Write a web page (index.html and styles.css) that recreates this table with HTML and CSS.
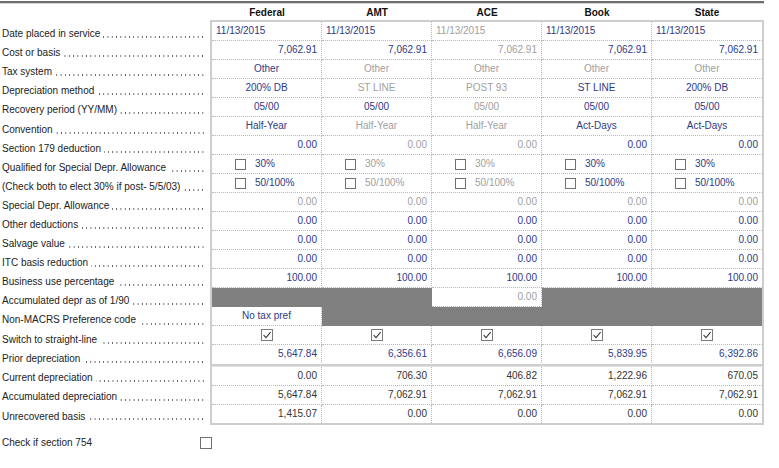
FILE: index.html
```html
<!DOCTYPE html>
<html>
<head>
<meta charset="utf-8">
<link rel="stylesheet" href="styles.css">
</head>
<body>
<div class="page">
  <div class="topline"></div>
  <div class="hdr">
    <div class="hsp"></div>
    <div class="hcol">Federal</div>
    <div class="hcol">AMT</div>
    <div class="hcol">ACE</div>
    <div class="hcol">Book</div>
    <div class="hcol">State</div>
  </div>

  <div class="section">
    <div class="labels top">
      <div class="lbl"><span>Date placed in service</span><span class="dots"></span></div>
      <div class="lbl"><span>Cost or basis</span><span class="dots"></span></div>
      <div class="lbl"><span>Tax system</span><span class="dots"></span></div>
      <div class="lbl"><span>Depreciation method</span><span class="dots"></span></div>
      <div class="lbl"><span>Recovery period (YY/MM)</span><span class="dots"></span></div>
      <div class="lbl"><span>Convention</span><span class="dots"></span></div>
      <div class="lbl"><span>Section 179 deduction</span><span class="dots"></span></div>
      <div class="lbl"><span>Qualified for Special Depr. Allowance</span><span class="dots"></span></div>
      <div class="lbl"><span>(Check both to elect 30% if post- 5/5/03)</span><span class="dots"></span></div>
      <div class="lbl"><span>Special Depr. Allowance</span><span class="dots"></span></div>
      <div class="lbl"><span>Other deductions</span><span class="dots"></span></div>
      <div class="lbl"><span>Salvage value</span><span class="dots"></span></div>
      <div class="lbl"><span>ITC basis reduction</span><span class="dots"></span></div>
      <div class="lbl"><span>Business use percentage</span><span class="dots"></span></div>
      <div class="lbl"><span>Accumulated depr as of 1/90</span><span class="dots"></span></div>
      <div class="lbl"><span>Non-MACRS Preference code</span><span class="dots"></span></div>
      <div class="lbl"><span>Switch to straight-line</span><span class="dots"></span></div>
      <div class="lbl"><span>Prior depreciation</span><span class="dots"></span></div>
    </div>
    <div class="box boxtop">
      <div class="row">
        <div class="c l b">11/13/2015</div><div class="c l b">11/13/2015</div><div class="c l g">11/13/2015</div><div class="c l b">11/13/2015</div><div class="c l b">11/13/2015</div>
      </div>
      <div class="row">
        <div class="c r b">7,062.91</div><div class="c r b">7,062.91</div><div class="c r g">7,062.91</div><div class="c r b">7,062.91</div><div class="c r b">7,062.91</div>
      </div>
      <div class="row">
        <div class="c m b">Other</div><div class="c m g">Other</div><div class="c m g">Other</div><div class="c m g">Other</div><div class="c m g">Other</div>
      </div>
      <div class="row">
        <div class="c m b">200% DB</div><div class="c m g">ST LINE</div><div class="c m g">POST 93</div><div class="c m b">ST LINE</div><div class="c m b">200% DB</div>
      </div>
      <div class="row">
        <div class="c m b">05/00</div><div class="c m b">05/00</div><div class="c m g">05/00</div><div class="c m b">05/00</div><div class="c m b">05/00</div>
      </div>
      <div class="row">
        <div class="c m b">Half-Year</div><div class="c m g">Half-Year</div><div class="c m g">Half-Year</div><div class="c m b">Act-Days</div><div class="c m b">Act-Days</div>
      </div>
      <div class="row">
        <div class="c r b">0.00</div><div class="c r g">0.00</div><div class="c r g">0.00</div><div class="c r b">0.00</div><div class="c r b">0.00</div>
      </div>
      <div class="row">
        <div class="c cb b"><span class="box-ck"></span>30%</div><div class="c cb g"><span class="box-ck"></span>30%</div><div class="c cb g"><span class="box-ck"></span>30%</div><div class="c cb b"><span class="box-ck"></span>30%</div><div class="c cb b"><span class="box-ck"></span>30%</div>
      </div>
      <div class="row">
        <div class="c cb b"><span class="box-ck"></span>50/100%</div><div class="c cb g"><span class="box-ck"></span>50/100%</div><div class="c cb g"><span class="box-ck"></span>50/100%</div><div class="c cb b"><span class="box-ck"></span>50/100%</div><div class="c cb b"><span class="box-ck"></span>50/100%</div>
      </div>
      <div class="row">
        <div class="c r g">0.00</div><div class="c r g">0.00</div><div class="c r g">0.00</div><div class="c r g">0.00</div><div class="c r g">0.00</div>
      </div>
      <div class="row">
        <div class="c r b">0.00</div><div class="c r b">0.00</div><div class="c r b">0.00</div><div class="c r b">0.00</div><div class="c r b">0.00</div>
      </div>
      <div class="row">
        <div class="c r b">0.00</div><div class="c r b">0.00</div><div class="c r b">0.00</div><div class="c r b">0.00</div><div class="c r b">0.00</div>
      </div>
      <div class="row">
        <div class="c r b">0.00</div><div class="c r b">0.00</div><div class="c r b">0.00</div><div class="c r b">0.00</div><div class="c r b">0.00</div>
      </div>
      <div class="row">
        <div class="c r b">100.00</div><div class="c r b">100.00</div><div class="c r b">100.00</div><div class="c r b">100.00</div><div class="c r b">100.00</div>
      </div>
      <div class="row">
        <div class="c dark"></div><div class="c dark"></div><div class="c r g">0.00</div><div class="c dark"></div><div class="c dark last"></div>
      </div>
      <div class="row">
        <div class="c m b">No tax pref</div><div class="c dark"></div><div class="c dark"></div><div class="c dark"></div><div class="c dark last"></div>
      </div>
      <div class="row">
        <div class="c ck"><svg width="12" height="12" viewBox="0 0 12 12"><rect x="0.5" y="0.5" width="11" height="11" fill="#fff" stroke="#7a7a7a"/><path d="M2.6 6.2 L5 8.6 L9.6 3.2" fill="none" stroke="#3a3a3a" stroke-width="1.1"/></svg></div>
        <div class="c ck"><svg width="12" height="12" viewBox="0 0 12 12"><rect x="0.5" y="0.5" width="11" height="11" fill="#fff" stroke="#7a7a7a"/><path d="M2.6 6.2 L5 8.6 L9.6 3.2" fill="none" stroke="#3a3a3a" stroke-width="1.1"/></svg></div>
        <div class="c ck"><svg width="12" height="12" viewBox="0 0 12 12"><rect x="0.5" y="0.5" width="11" height="11" fill="#fff" stroke="#7a7a7a"/><path d="M2.6 6.2 L5 8.6 L9.6 3.2" fill="none" stroke="#3a3a3a" stroke-width="1.1"/></svg></div>
        <div class="c ck"><svg width="12" height="12" viewBox="0 0 12 12"><rect x="0.5" y="0.5" width="11" height="11" fill="#fff" stroke="#7a7a7a"/><path d="M2.6 6.2 L5 8.6 L9.6 3.2" fill="none" stroke="#3a3a3a" stroke-width="1.1"/></svg></div>
        <div class="c ck"><svg width="12" height="12" viewBox="0 0 12 12"><rect x="0.5" y="0.5" width="11" height="11" fill="#fff" stroke="#7a7a7a"/><path d="M2.6 6.2 L5 8.6 L9.6 3.2" fill="none" stroke="#3a3a3a" stroke-width="1.1"/></svg></div>
      </div>
      <div class="row">
        <div class="c r b">5,647.84</div><div class="c r b">6,356.61</div><div class="c r b">6,656.09</div><div class="c r b">5,839.95</div><div class="c r b">6,392.86</div>
      </div>
    </div>
  </div>

  <div class="section">
    <div class="labels bot">
      <div class="lbl"><span>Current depreciation</span><span class="dots"></span></div>
      <div class="lbl"><span>Accumulated depreciation</span><span class="dots"></span></div>
      <div class="lbl"><span>Unrecovered basis</span><span class="dots"></span></div>
    </div>
    <div class="box boxbot">
      <div class="row">
        <div class="c r k">0.00</div><div class="c r k">706.30</div><div class="c r k">406.82</div><div class="c r k">1,222.96</div><div class="c r k">670.05</div>
      </div>
      <div class="row">
        <div class="c r k">5,647.84</div><div class="c r k">7,062.91</div><div class="c r k">7,062.91</div><div class="c r k">7,062.91</div><div class="c r k">7,062.91</div>
      </div>
      <div class="row">
        <div class="c r k">1,415.07</div><div class="c r k">0.00</div><div class="c r k">0.00</div><div class="c r k">0.00</div><div class="c r k">0.00</div>
      </div>
    </div>
  </div>

  <div class="sec754">
    <span class="s754lbl">Check if section 754</span>
    <span class="box-ck big"></span>
  </div>
</div>
</body>
</html>
```

FILE: styles.css
```css
html, body {
  margin: 0;
  padding: 0;
  background: #ffffff;
}
body {
  font-family: "Liberation Sans", Arial, sans-serif;
  font-size: 10px;
  color: #222;
}
.page {
  width: 779px;
  padding-top: 1px;
}
.topline {
  width: 764px;
  height: 2px;
  background: #6e6e6e;
  border-bottom: 1px solid #d6d6d6;
  box-sizing: content-box;
}
.hdr {
  display: flex;
  height: 16px;
  align-items: center;
}
.hsp {
  width: 212px;
}
.hcol {
  width: 110px;
  text-align: center;
  font-weight: bold;
  color: #111;
  font-size: 10px;
}
.section {
  display: flex;
}
.labels {
  width: 210px;
}
.labels.top {
  padding-top: 2px;
}
.lbl {
  height: 19.1px;
  box-sizing: border-box;
  padding: 4px 0 0 2px;
  display: flex;
  align-items: center;
  white-space: nowrap;
  color: #222;
}
.labels.bot .lbl {
  height: 19.2px;
  padding-top: 5px;
}
.dots {
  flex: 1;
  align-self: flex-end;
  height: 2px;
  margin: 0 5px 3px 3px;
  min-width: 0;
  background-image: radial-gradient(circle, #5a5a5a 0.55px, rgba(90, 90, 90, 0) 0.95px);
  background-size: 4.3px 2px;
  background-position: right center;
  background-repeat: repeat-x;
}
.box {
  border-left: 2px solid #cdcdcd;
  border-right: 2px solid #cdcdcd;
  width: 550px;
}
.boxtop {
  border-top: 2px solid #cdcdcd;
  border-bottom: 2px solid #cdcdcd;
}
.boxbot {
  border-top: 1px solid #e2e2e2;
  border-bottom: 2px solid #cdcdcd;
}
.row {
  display: flex;
}
.c {
  width: 110px;
  height: 19px;
  box-sizing: border-box;
  border-bottom: 1px dotted #b9b9b9;
  border-right: 1px dotted #b9b9b9;
  padding: 0 4px;
  line-height: 18px;
  white-space: nowrap;
  overflow: hidden;
}
.row .c:last-child {
  border-right: none;
}
.row:last-child .c {
  border-bottom: none;
  height: 18px;
}
.l { text-align: left; }
.r { text-align: right; }
.m { text-align: center; }
.b { color: #2d3a86; }
.g { color: #a0a0a0; }
.k { color: #333333; }
.dark {
  background: #808080;
  border-color: #808080;
  border-style: solid;
}
.row .c.dark.last {
  border-right: none;
}
.cb {
  display: flex;
  align-items: center;
  padding-left: 23px;
  gap: 9px;
}
.box-ck {
  display: inline-block;
  width: 11px;
  height: 11px;
  box-sizing: border-box;
  border: 1px solid #707070;
  background: #fff;
  flex: none;
}
.ck {
  display: flex;
  align-items: center;
  justify-content: center;
}
.ck svg {
  display: block;
}
.sec754 {
  display: flex;
  align-items: center;
  height: 16px;
  margin-top: 10px;
  padding-left: 2px;
}
.s754lbl {
  width: 198px;
  color: #222;
}
.box-ck.big {
  width: 12px;
  height: 12px;
}
```
